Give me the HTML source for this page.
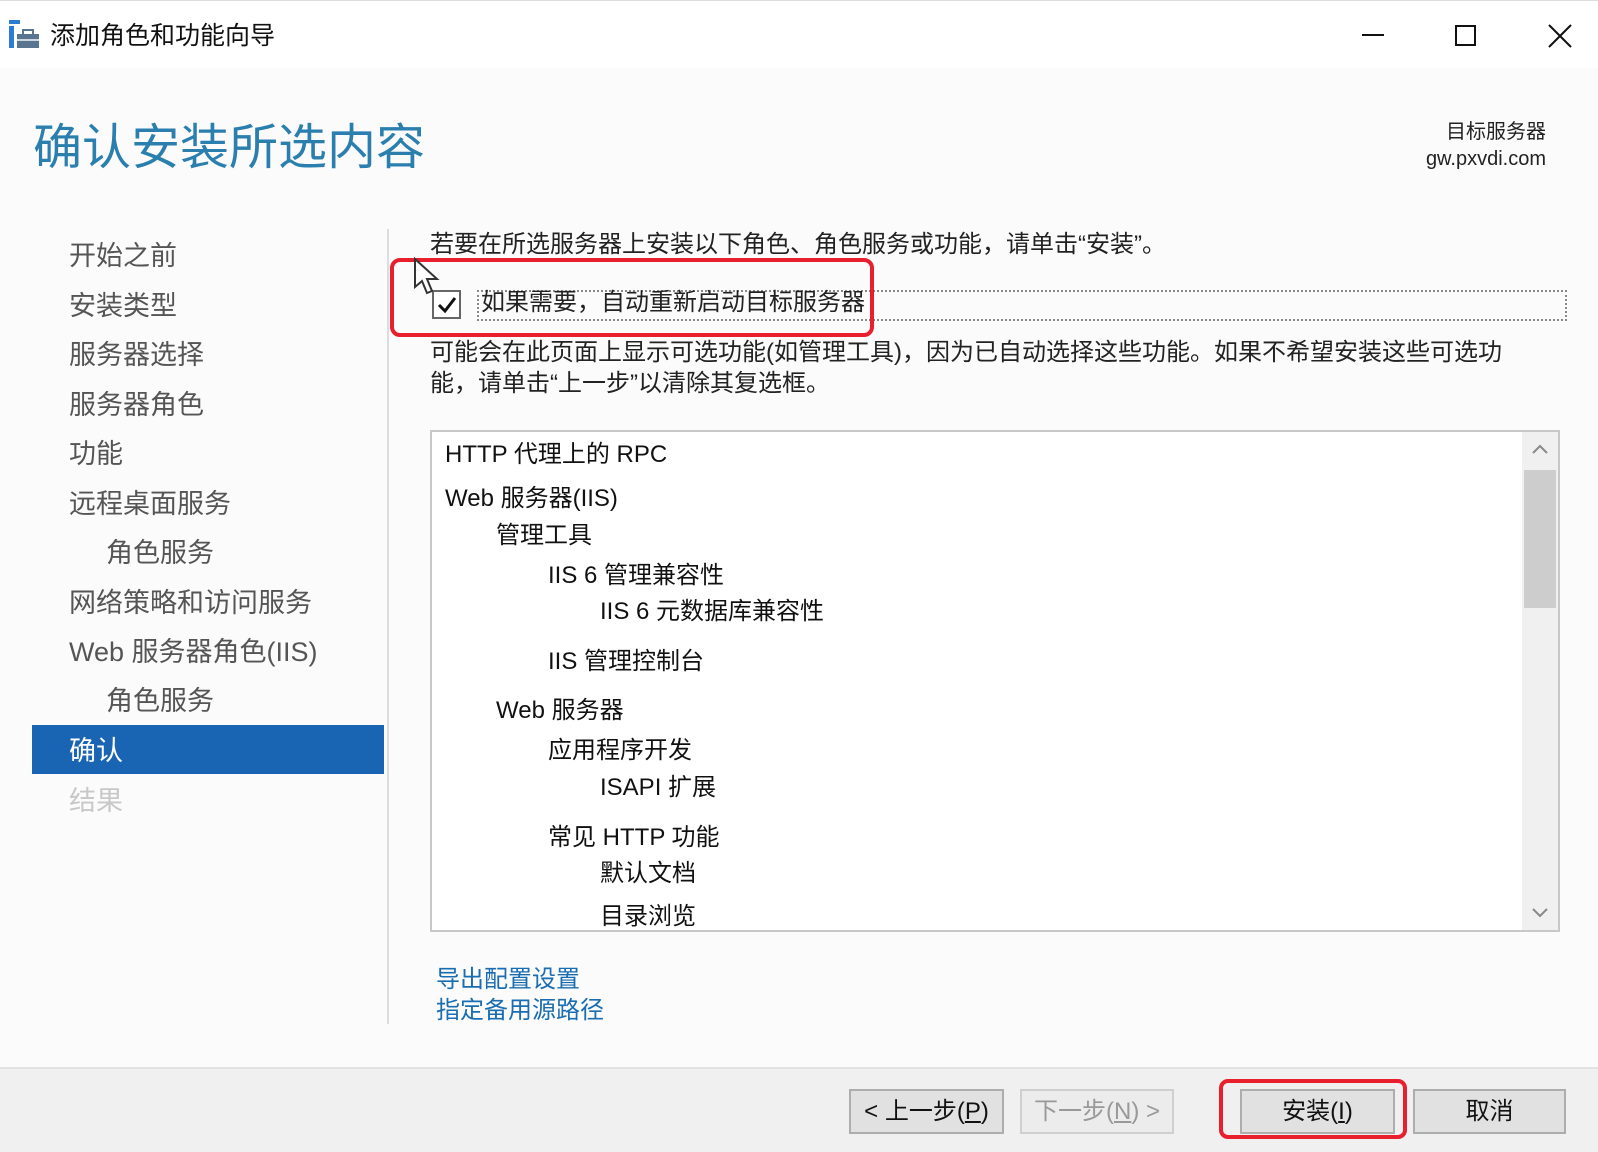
<!DOCTYPE html>
<html><head><meta charset="utf-8"><style>
*{margin:0;padding:0;box-sizing:border-box}
body{width:1598px;height:1152px;background:#fbfbfb;position:relative;overflow:hidden;font-family:"Liberation Sans","Noto Sans CJK SC",sans-serif;color:#222}
.a{position:absolute;white-space:nowrap}
.nav{position:absolute;left:69px;font-size:27px;color:#555;line-height:34px}
.li{position:absolute;font-size:24px;color:#111;line-height:30px}
.btn{position:absolute;top:1089px;height:45px;background:#e1e1e1;border:2px solid #adadad;font-size:24px;text-align:center;line-height:41px;color:#111}
</style></head><body>
<div class="a" style="left:0;top:0;width:1598px;height:68px;background:#fff;border-top:1px solid #ddd"></div>
<svg class="a" style="left:9px;top:20px" width="30" height="30" viewBox="0 0 30 30"><rect x="0" y="0" width="11" height="4" fill="#2b7cd3"/><rect x="0" y="6" width="5" height="22" fill="#2b7cd3"/><rect x="8" y="14" width="22" height="14" fill="#5a7590"/><rect x="14" y="10" width="10" height="5" fill="none" stroke="#5a7590" stroke-width="2"/><rect x="8" y="19" width="22" height="2" fill="#cfd8e0"/></svg>
<div class="a" style="left:50px;top:20px;font-size:25px;line-height:32px;color:#111">添加角色和功能向导</div>
<div class="a" style="left:1362px;top:34px;width:22px;height:2px;background:#111"></div>
<div class="a" style="left:1455px;top:25px;width:21px;height:21px;border:2px solid #111"></div>
<svg class="a" style="left:1548px;top:24px" width="24" height="24"><path d="M1 1L23 23M23 1L1 23" stroke="#111" stroke-width="2"/></svg>
<div class="a" style="left:33px;top:116px;font-size:49px;line-height:64px;color:#2a7fae">确认安装所选内容</div>
<div class="a" style="right:52px;top:119px;font-size:20px;line-height:27px;text-align:right;color:#222">目标服务器<br>gw.pxvdi.com</div>
<div class="nav" style="top:239px">开始之前</div>
<div class="nav" style="top:289px">安装类型</div>
<div class="nav" style="top:338px">服务器选择</div>
<div class="nav" style="top:388px">服务器角色</div>
<div class="nav" style="top:437px">功能</div>
<div class="nav" style="top:487px">远程桌面服务</div>
<div class="nav" style="top:536px;left:106px">角色服务</div>
<div class="nav" style="top:586px">网络策略和访问服务</div>
<div class="nav" style="top:635px">Web 服务器角色(IIS)</div>
<div class="nav" style="top:684px;left:106px">角色服务</div>
<div class="a" style="left:32px;top:725px;width:352px;height:49px;background:#1a64b4"></div>
<div class="nav" style="top:734px;color:#fff">确认</div>
<div class="nav" style="top:784px;color:#c8c8c8">结果</div>
<div class="a" style="left:387px;top:229px;width:2px;height:795px;background:#ddd"></div>
<div class="a" style="left:430px;top:230px;font-size:24px;line-height:30px">若要在所选服务器上安装以下角色、角色服务或功能，请单击“安装”。</div>
<div class="a" style="left:477px;top:290px;width:1090px;height:31px;border:2px dotted #888"></div>
<div class="a" style="left:432px;top:290px;width:29px;height:29px;border:2px solid #666;background:#fff"></div>
<svg class="a" style="left:436px;top:294px" width="22" height="22"><path d="M3 11L9 17L19 4" stroke="#111" stroke-width="3" fill="none"/></svg>
<div class="a" style="left:481px;top:288px;font-size:24px;line-height:30px">如果需要，自动重新启动目标服务器</div>
<div class="a" style="left:390px;top:258px;width:484px;height:79px;border:4px solid #e8202e;border-radius:10px"></div>
<svg class="a" style="left:413px;top:257px" width="28" height="40"><path d="M2 2L2 30L9 24L14 36L19 34L14 22L24 22Z" fill="#fff" stroke="#333" stroke-width="2"/></svg>
<div class="a" style="left:430px;top:337px;font-size:24px;line-height:31px">可能会在此页面上显示可选功能(如管理工具)，因为已自动选择这些功能。如果不希望安装这些可选功<br>能，请单击“上一步”以清除其复选框。</div>
<div class="a" style="left:430px;top:430px;width:1130px;height:502px;background:#fff;border:2px solid #c8c8c8;overflow:hidden">
<div class="a" style="right:0;top:0;width:36px;height:500px;background:#f0f0f0"></div>
<div class="a" style="right:2px;top:38px;width:32px;height:138px;background:#cdcdcd"></div>
<svg class="a" style="right:10px;top:12px" width="16" height="10"><path d="M1 9L8 2L15 9" stroke="#888" stroke-width="2" fill="none"/></svg>
<svg class="a" style="right:10px;bottom:12px" width="16" height="10"><path d="M1 1L8 8L15 1" stroke="#888" stroke-width="2" fill="none"/></svg>
</div>
<div class="li" style="left:445px;top:440px">HTTP 代理上的 RPC</div>
<div class="li" style="left:445px;top:484px">Web 服务器(IIS)</div>
<div class="li" style="left:496px;top:521px">管理工具</div>
<div class="li" style="left:548px;top:561px">IIS 6 管理兼容性</div>
<div class="li" style="left:600px;top:597px">IIS 6 元数据库兼容性</div>
<div class="li" style="left:548px;top:647px">IIS 管理控制台</div>
<div class="li" style="left:496px;top:696px">Web 服务器</div>
<div class="li" style="left:548px;top:736px">应用程序开发</div>
<div class="li" style="left:600px;top:773px">ISAPI 扩展</div>
<div class="li" style="left:548px;top:823px">常见 HTTP 功能</div>
<div class="li" style="left:600px;top:859px">默认文档</div>
<div style="position:absolute;left:432px;top:900px;width:1090px;height:30px;overflow:hidden"><div class="li" style="left:168px;top:2px">目录浏览</div></div>
<div class="a" style="left:436px;top:965px;font-size:24px;line-height:30px;color:#1a6db0">导出配置设置</div>
<div class="a" style="left:436px;top:996px;font-size:24px;line-height:30px;color:#1a6db0">指定备用源路径</div>
<div class="a" style="left:0;top:1067px;width:1598px;height:85px;background:#f0f0f0;border-top:2px solid #e2e2e2"></div>
<div class="btn" style="left:849px;width:155px">&lt; 上一步(<u>P</u>)</div>
<div class="btn" style="left:1020px;width:154px;color:#999;background:#ececec;border-color:#cfcfcf">下一步(<u>N</u>) &gt;</div>
<div class="btn" style="left:1240px;width:155px">安装(<u>I</u>)</div>
<div class="btn" style="left:1413px;width:153px">取消</div>
<div class="a" style="left:1219px;top:1079px;width:188px;height:60px;border:4px solid #e8202e;border-radius:9px"></div>
</body></html>
